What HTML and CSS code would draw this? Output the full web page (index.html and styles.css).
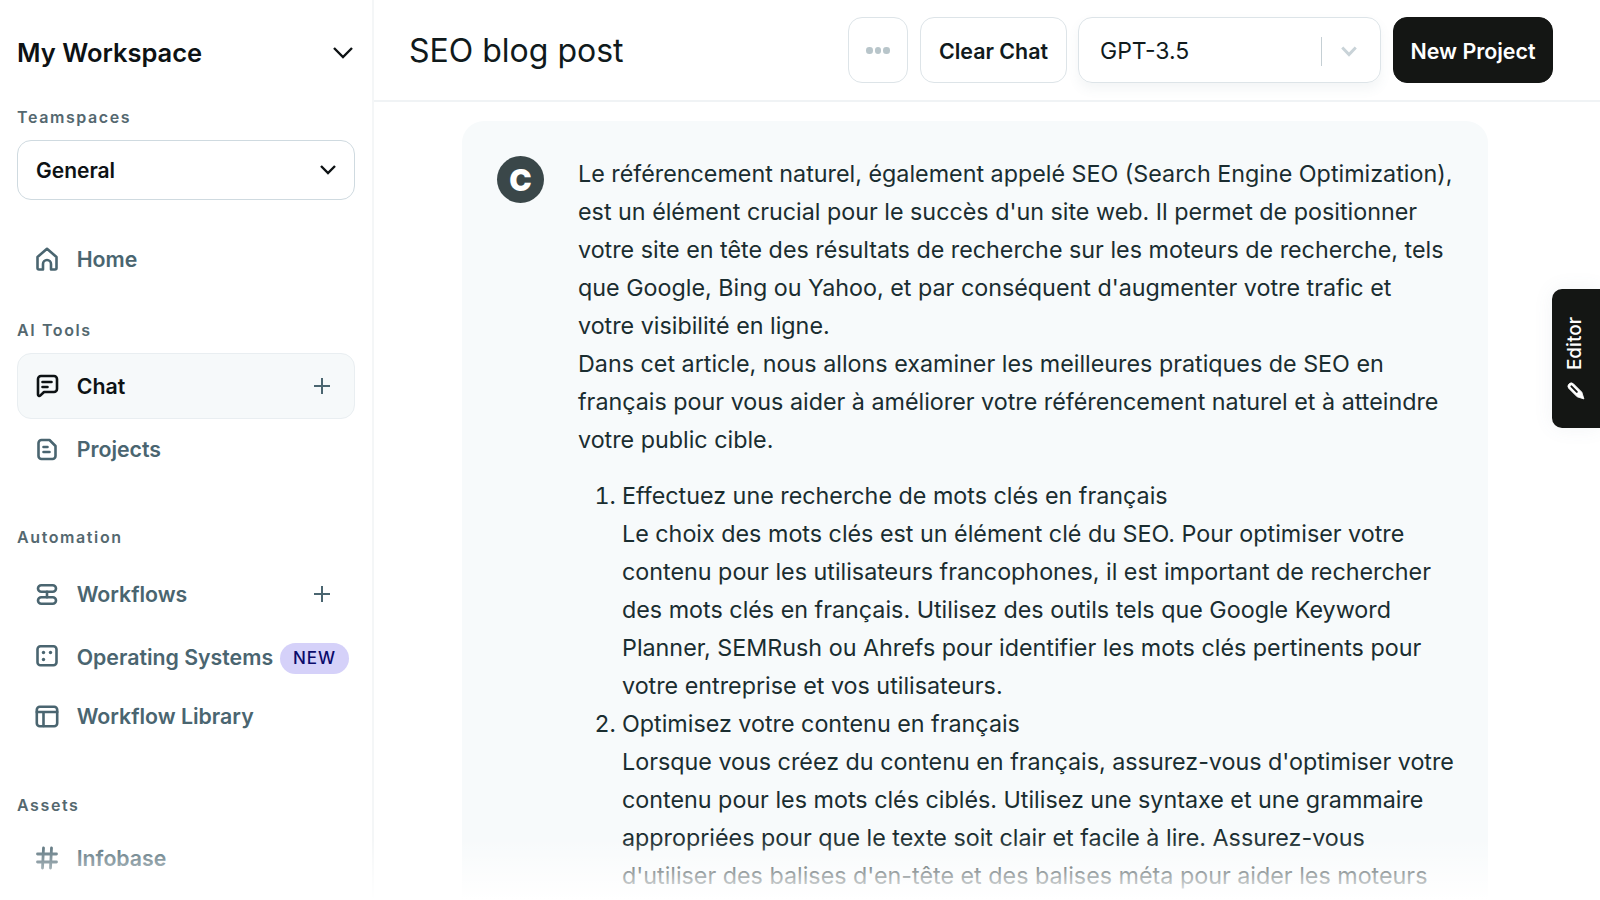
FILE: index.html
```html
<!DOCTYPE html>
<html lang="fr">
<head>
<meta charset="utf-8">
<title>SEO blog post</title>
<link rel="stylesheet" href="styles.css">
</head>
<body>
<div class="app">
  <aside class="sidebar">
    <div class="workspace">
      <span>My Workspace</span>
      <svg class="ws-chev" viewBox="0 0 24 24"><path d="M3 7l9 9 9-9"/></svg>
    </div>
    <div class="label label-team">Teamspaces</div>
    <div class="team-select">
      <span>General</span>
      <svg class="team-chev" viewBox="0 0 24 24"><path d="M5 8l7 7 7-7"/></svg>
    </div>
    <div class="item item-home">
      <svg class="ico" viewBox="0 0 24 24"><path d="M2.500 21V10L12 1.800 21.500 10V21a1.500 1.500 0 0 1-1.500 1.500H16V17a4 4 0 0 0-8 0v5.500H4A1.500 1.500 0 0 1 2.500 21z"/></svg>
      <span>Home</span>
    </div>
    <div class="label label-ai">AI Tools</div>
    <div class="item item-active">
      <svg class="ico" viewBox="0 0 24 24"><path d="M3 5a3 3 0 0 1 3-3h13a3 3 0 0 1 3 3v10a3 3 0 0 1-3 3H9l-3.800 3.600A1.300 1.300 0 0 1 3 20.600z"/><path d="M7.500 8h9M7.500 13h5"/></svg>
      <span>Chat</span>
      <svg class="plus" viewBox="0 0 18 18"><path d="M9 1v16M1 9h16"/></svg>
    </div>
    <div class="item item-projects">
      <svg class="ico" viewBox="0 0 24 24"><path d="M3.500 6a3 3 0 0 1 3-3h8l6 6v10a3 3 0 0 1-3 3h-11a3 3 0 0 1-3-3z"/><path d="M8.500 10h4M8.500 15h6"/></svg>
      <span>Projects</span>
    </div>
    <div class="label label-auto">Automation</div>
    <div class="item item-workflows">
      <svg class="ico" viewBox="0 0 24 24"><rect x="3" y="3.200" width="18" height="6.600" rx="3.300"/><rect x="3" y="15.200" width="18" height="6.600" rx="3.300"/><path d="M12 9.800v5.400"/></svg>
      <span>Workflows</span>
      <svg class="plus" viewBox="0 0 18 18"><path d="M9 1v16M1 9h16"/></svg>
    </div>
    <div class="item item-os">
      <svg class="ico" viewBox="0 0 24 24"><rect x="2.500" y="1.300" width="19" height="19" rx="3"/><circle class="dot" cx="8.500" cy="7.500" r="1.700"/><circle class="dot" cx="15.500" cy="7.500" r="1.700"/><circle class="dot" cx="8.500" cy="14.500" r="1.700"/></svg>
      <span class="nowrap">Operating Systems</span>
      <span class="badge">NEW</span>
    </div>
    <div class="item item-library">
      <svg class="ico" viewBox="0 0 24 24"><rect x="1.800" y="2.800" width="20.400" height="19.500" rx="3"/><path d="M1.800 8h20.400M8.500 8v14"/></svg>
      <span>Workflow Library</span>
    </div>
    <div class="label label-assets">Assets</div>
    <div class="item item-info">
      <svg class="ico ico-hash" viewBox="0 0 24 24"><path d="M8.500 2L7.500 22M16.500 2l-1 20M2.500 8h19M2.500 16h19"/></svg>
      <span>Infobase</span>
    </div>
  </aside>
  <main class="main">
    <header class="topbar">
      <h1 class="title">SEO blog post</h1>
      <div class="actions">
        <button class="btn btn-dots"><i></i><i></i><i></i></button>
        <button class="btn btn-clear">Clear Chat</button>
        <div class="model">
          <span class="model-name">GPT-3.5</span>
          <span class="model-sep"></span>
          <svg class="model-chev" viewBox="0 0 20 20"><path d="M2.500 6l7.500 8 7.500-8"/></svg>
        </div>
        <button class="btn btn-new">New Project</button>
      </div>
    </header>
    <section class="content">
      <article class="card">
        <div class="avatar"><span>C</span></div>
        <div class="msg">
          <p>Le référencement naturel, également appelé SEO (Search Engine Optimization), est un élément crucial pour le succès d'un site web. Il permet de positionner votre site en tête des résultats de recherche sur les moteurs de recherche, tels que Google, Bing ou Yahoo, et par conséquent d'augmenter votre trafic et<br>votre visibilité en ligne.<br>Dans cet article, nous allons examiner les meilleures pratiques de SEO en français pour vous aider à améliorer votre référencement naturel et à atteindre votre public cible.</p>
          <ol>
            <li>Effectuez une recherche de mots clés en français<br>Le choix des mots clés est un élément clé du SEO. Pour optimiser votre contenu pour les utilisateurs francophones, il est important de rechercher des mots clés en français. Utilisez des outils tels que Google Keyword Planner, SEMRush ou Ahrefs pour identifier les mots clés pertinents pour votre entreprise et vos utilisateurs.</li>
            <li>Optimisez votre contenu en français<br>Lorsque vous créez du contenu en français, assurez-vous d'optimiser votre contenu pour les mots clés ciblés. Utilisez une syntaxe et une grammaire appropriées pour que le texte soit clair et facile à lire. Assurez-vous d'utiliser des balises d'en-tête et des balises méta pour aider les moteurs</li>
          </ol>
        </div>
      </article>
    </section>
    <div class="editor-tab">
      <span>Editor</span>
      <svg viewBox="0 0 24 24"><path class="pencil" d="M8.800 3.200L19 13.400l2.500 8.100-8.100-2.500L3.200 8.800a4 4 0 0 1 5.600-5.600z"/><path class="slot" d="M6.500 6.500L13 13"/></svg>
    </div>
  </main>
</div>
<div class="fade"></div>
</body>
</html>
```
FILE: styles.css
```css
* { box-sizing: border-box; }
html, body { margin: 0; height: 100%; overflow: hidden; background: #fff; }
body { font-family: Inter, "Liberation Sans", sans-serif; color: #101a1c; position: relative; }
.app { display: flex; height: 900px; }

.sidebar { width: 374px; flex: none; border-right: 2px solid #f4f6f7; padding: 0 17px; overflow: hidden; }
.workspace { display: flex; align-items: center; justify-content: space-between; height: 105px; font-size: 25.500px; font-weight: 600; color: #0d1214; }
.ws-chev { width: 24px; height: 24px; fill: none; stroke: #0d1214; stroke-width: 2.4; }
.label { font-size: 16px; font-weight: 600; letter-spacing: 1.600px; color: #54686f; line-height: 20px; }
.label-team { margin-top: 2px; }
.team-select { display: flex; align-items: center; justify-content: space-between; height: 60px; margin-top: 13px; padding: 0 14px 0 18px; border: 1px solid #cfdae0; border-radius: 14px; font-size: 21px; font-weight: 600; color: #0d1214; }
.team-chev { width: 24px; height: 24px; fill: none; stroke: #0d1214; stroke-width: 2.4; }
.item { display: flex; align-items: center; height: 60px; padding: 0 17px; font-size: 21.300px; font-weight: 600; color: #4a6570; border: 1px solid transparent; border-radius: 14px; }
.nowrap { white-space: nowrap; }
.ico { width: 24px; height: 24px; flex: none; margin-right: 17.700px; fill: none; stroke: #4a6570; stroke-width: 2.6; stroke-linejoin: round; stroke-linecap: round; }
.ico .dot { fill: #4a6570; stroke: none; }
.ico-hash { stroke-width: 2.8; }
.plus { width: 18px; height: 18px; margin-left: auto; margin-right: 6px; fill: none; stroke: #4a6570; stroke-width: 2; }
.item-home { margin-top: 29px; }
.label-ai { margin-top: 31px; }
.item-active { height: 66px; margin-top: 13px; background: #f6f9fa; border-color: #e9eef1; color: #0d1214; }
.item-active .ico { stroke: #0d1214; }
.item-projects { margin-top: 0; }
.label-auto { margin-top: 48px; }
.item-workflows { margin-top: 17px; }
.item-os { height: 59px; margin-top: 3px; padding-right: 5px; }
.item-library { margin-top: 0; }
.label-assets { margin-top: 49px; }
.item-info { margin-top: 13px; }
.badge { margin-left: auto; margin-top: 3px; width: 69px; height: 31px; border-radius: 16px; background: #d5d1f9; color: #0b0a6b; font-size: 17px; font-weight: 500; letter-spacing: 1px; display: flex; align-items: center; justify-content: center; }

.main { flex: 1; min-width: 0; position: relative; display: flex; flex-direction: column; }
.topbar { display: flex; align-items: center; justify-content: space-between; height: 102px; flex: none; padding: 0 47px 0 35px; border-bottom: 2px solid #f0f3f5; }
.title { margin: 0; font-size: 32px; font-weight: 400; color: #101a1c; }
.actions { display: flex; align-items: stretch; height: 66px; gap: 12px; }
.btn { font-family: inherit; border: 1px solid #dde4e8; background: #fff; border-radius: 14px; font-size: 21.400px; font-weight: 600; color: #101a1c; padding: 1px 0 0; }
.btn-dots { width: 60px; display: flex; align-items: center; justify-content: center; gap: 2px; }
.btn-dots i { width: 6.500px; height: 6.500px; border-radius: 50%; background: #b8c5ca; }
.btn-clear { width: 147px; }
.model { width: 303px; margin-left: -1px; display: flex; align-items: center; border: 1px solid #dde4e8; border-radius: 14px; padding: 2px 22px 0 21px; font-size: 23px; color: #101a1c; box-shadow: 0 6px 12px rgba(80,110,130,.07); }
.model-name { flex: 1; }
.model-sep { width: 1.500px; height: 29px; background: #c5cfd4; margin-right: 18px; }
.model-chev { width: 18px; height: 18px; fill: none; stroke: #c9d3d8; stroke-width: 3.2; }
.btn-new { width: 160px; background: #141614; border-color: #141614; color: #fff; }

.content { flex: 1; min-height: 0; overflow: hidden; padding: 19px 0 0 88px; }
.card { display: flex; width: 1026px; background: #f7fafb; border-radius: 22px; padding: 34px 32px 30px 35px; }
.avatar { width: 47px; height: 47px; border-radius: 50%; background: #3a4749; flex: none; display: flex; align-items: center; justify-content: center; color: #fff; font-weight: 900; font-size: 30px; margin: 1px 34px 0 0; }
.msg { font-size: 23.300px; line-height: 38px; color: #1a2d30; min-width: 0; flex: 1; }
.msg p { margin: 0 0 18px; }
.msg ol { margin: 0; padding-left: 44px; }

.editor-tab { position: absolute; right: 0; top: 289px; width: 48px; height: 139px; padding-top: 1px; background: #141614; border-radius: 10px 0 0 10px; color: #fff; display: flex; flex-direction: column; align-items: center; justify-content: center; gap: 11px; font-size: 19px; font-weight: 500; box-shadow: 0 0 20px rgba(90,120,140,.08); }
.editor-tab span { writing-mode: vertical-rl; transform: rotate(180deg); margin-right: 3px; }
.editor-tab svg { width: 20px; height: 20px; }
.pencil { fill: #fff; stroke: #fff; stroke-width: 1; stroke-linejoin: round; }
.slot { fill: none; stroke: #141614; stroke-width: 2.4; stroke-linecap: round; }

.fade { position: absolute; left: 0; right: 0; bottom: 0; height: 62px; background: linear-gradient(to bottom, rgba(255,255,255,0), #fff); pointer-events: none; }
```
